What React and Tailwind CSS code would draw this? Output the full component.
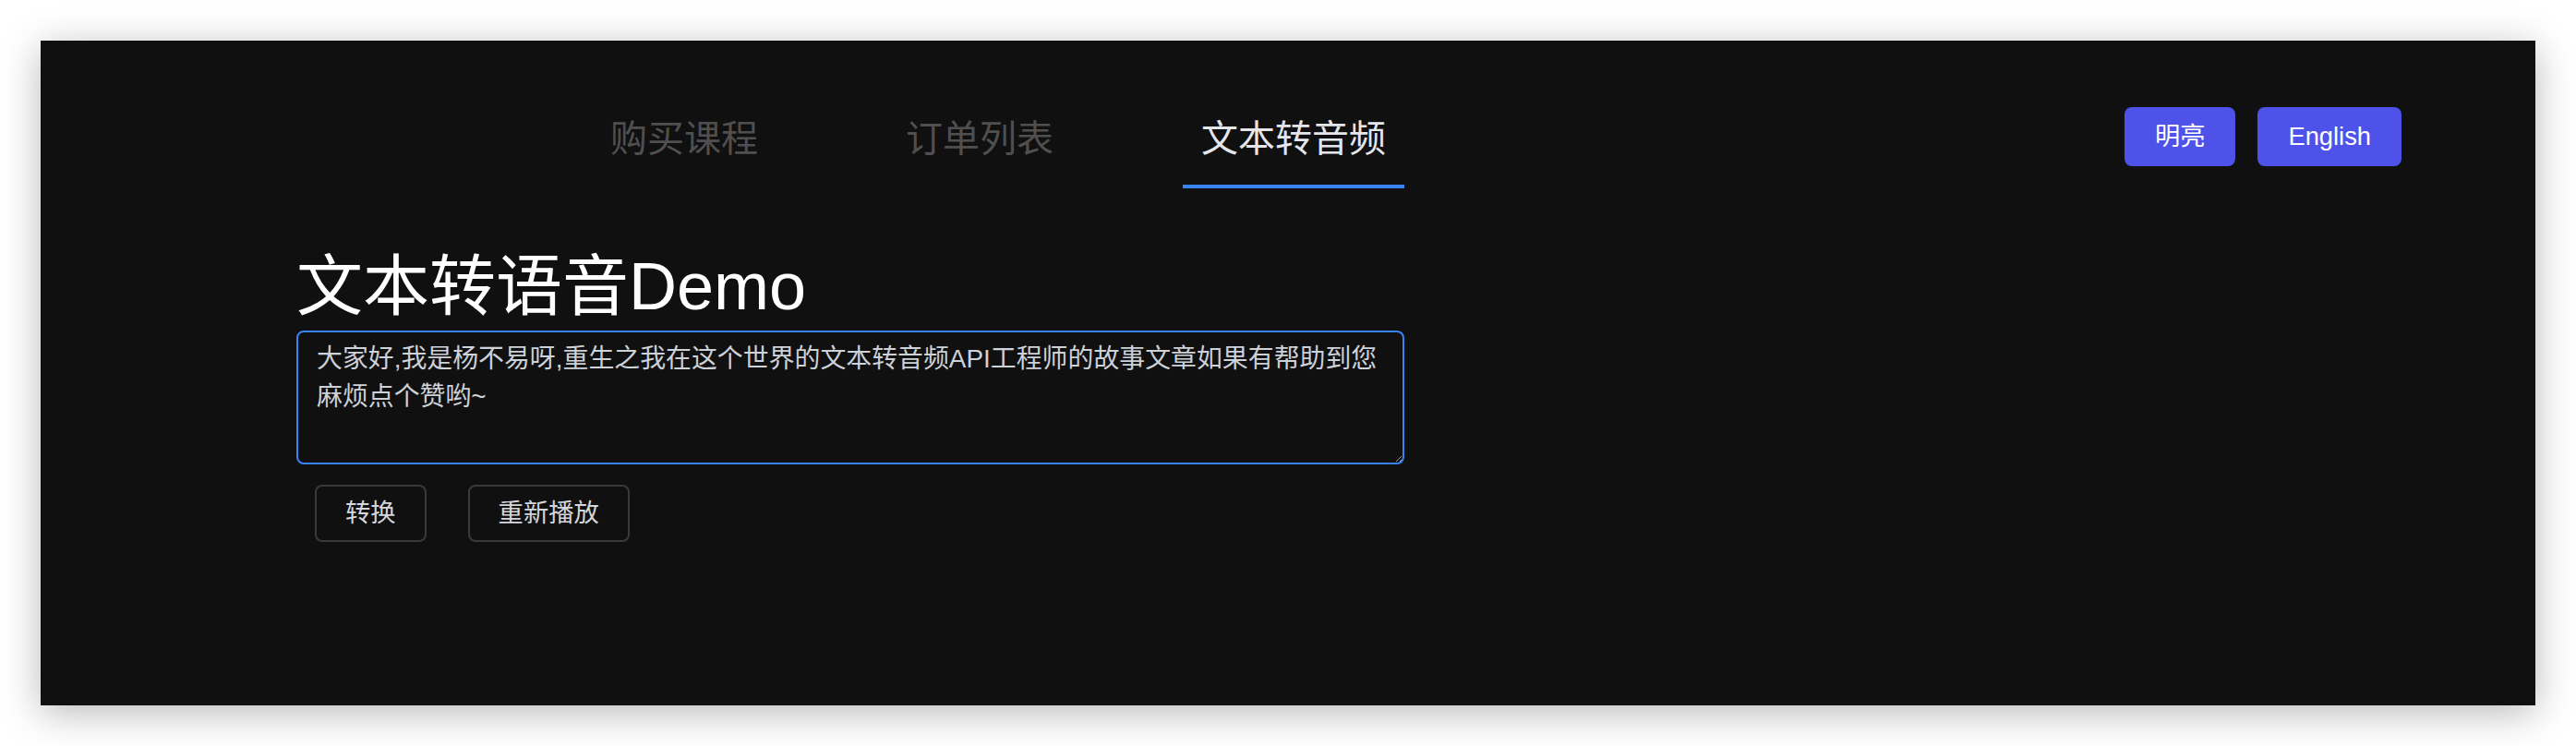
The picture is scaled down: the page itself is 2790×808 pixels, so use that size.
import { useState } from 'react'

const font = "font-['Liberation_Sans','Noto_Sans_CJK_SC',sans-serif]"

const tabs = ['购买课程', '订单列表', '文本转音频']

function Tab({ label, active }) {
  return (
    <button
      className={`px-[20px] pb-[20px] text-[40px] leading-[60px] border-b-4 ${
        active ? 'text-[#e4e6eb] border-[#3884f6]' : 'text-[#4f4f4f] border-transparent'
      }`}
    >
      {label}
    </button>
  )
}

export default function App() {
  const [active] = useState(2)
  const [text, setText] = useState(
    '大家好,我是杨不易呀,重生之我在这个世界的文本转音频API工程师的故事文章如果有帮助到您麻烦点个赞哟~'
  )

  return (
    <div className={`w-[2790px] h-[808px] bg-white p-[44px] ${font}`}>
      <div className="w-[2702px] h-[720px] bg-[#101010] shadow-[0_8px_40px_rgba(0,0,0,0.28)]">
        <header className="flex items-start pt-[72px]">
          <nav className="ml-[277px] w-[1200px] flex justify-end gap-[120px] pt-[4px]">
            {tabs.map((t, i) => (
              <Tab key={t} label={t} active={i === active} />
            ))}
          </nav>
          <div className="ml-auto mr-[145px] flex gap-[24px]">
            <button className="h-[64px] px-[33px] rounded-[8px] bg-[#4f52e8] text-white text-[27.3px]">明亮</button>
            <button className="h-[64px] px-[33px] rounded-[8px] bg-[#4f52e8] text-white text-[27.3px]">English</button>
          </div>
        </header>

        <main className="ml-[277px] w-[1200px]">
          <h1 className="mt-[68px] text-[72px] leading-[76px] text-white">文本转语音Demo</h1>
          <textarea
            value={text}
            onChange={e => setText(e.target.value)}
            className="mt-[10px] block w-[1200px] h-[145px] rounded-[8px] border-2 border-[#3884f6] bg-transparent px-[20px] pt-[8px] text-[27.9px] leading-[41px] text-[#cdd1d8] outline-none"
          />
          <div className="mt-[22px] ml-[20px] flex gap-[45px]">
            <button className="h-[62px] px-[31px] rounded-[8px] border-2 border-[#3a3a3a] text-[27.3px] text-[#d4d6db]">转换</button>
            <button className="h-[62px] px-[31px] rounded-[8px] border-2 border-[#3a3a3a] text-[27.3px] text-[#d4d6db]">重新播放</button>
          </div>
        </main>
      </div>
    </div>
  )
}
